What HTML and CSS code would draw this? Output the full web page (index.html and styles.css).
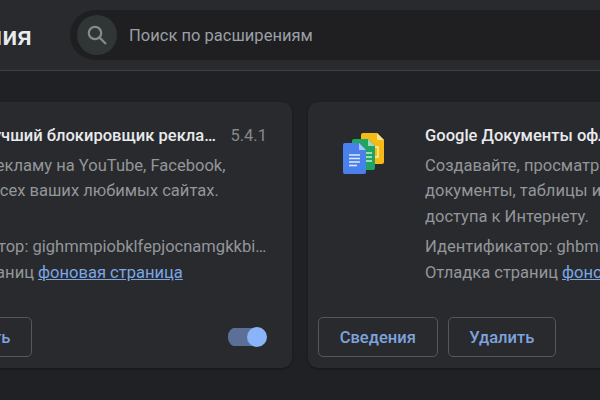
FILE: index.html
```html
<!DOCTYPE html>
<html lang="ru">
<head>
    <meta charset="UTF-8">
    <title>Расширения</title>
    <link rel="stylesheet" href="styles.css">
</head>
<body>
    <div class="toolbar">
        <h1>Расширения</h1>
        <div class="search">
            <div class="search-icon">
                <svg width="24" height="24" viewBox="0 0 24 24" fill="none" stroke="#858a8c" stroke-width="2.2">
                    <circle cx="10" cy="10" r="6.2"/>
                    <path d="M14.6 14.6 L21 21"/>
                </svg>
            </div>
            <span class="search-text">Поиск по расширениям</span>
        </div>
    </div>

    <div class="cards">
        <div class="card">
            <div class="card-main">
                <div class="icon"></div>
                <div class="card-body">
                    <div class="title-row">
                        <div class="title">AdBlock — лучший блокировщик рекламы</div>
                        <div class="version">5.4.1</div>
                    </div>
                    <div class="desc">Блокирует рекламу на YouTube, Facebook,<br>Twitch и на всех ваших любимых сайтах.<br>&nbsp;</div>
                    <div class="id-line">Идентификатор: gighmmpiobklfepjocnamgkkbiglidom</div>
                    <div class="debug">Отладка страниц <a href="#">фоновая страница</a></div>
                </div>
            </div>
            <div class="card-footer">
                <div class="buttons">
                    <button class="btn btn-info">Сведения</button>
                    <button class="btn btn-remove">Удалить</button>
                </div>
                <div class="toggle"><div class="knob"></div></div>
            </div>
        </div>

        <div class="card">
            <div class="card-main">
                <div class="icon">
                    <svg width="48" height="48" viewBox="0 0 48 48">
                        <path d="M23 3 H37 L44 10 V32 a2 2 0 0 1 -2 2 H23 a2 2 0 0 1 -2 -2 V5 a2 2 0 0 1 2 -2 Z" fill="#f5ba15"/>
                        <path d="M37 3 L44 10 H37 Z" fill="#fbe08a"/>
                        <rect x="29" y="17" width="9" height="10" fill="none" stroke="#fdf0c0" stroke-width="1.3"/>
                        <path d="M14 9 H28 L35 16 V38 a2 2 0 0 1 -2 2 H14 a2 2 0 0 1 -2 -2 V11 a2 2 0 0 1 2 -2 Z" fill="#1fa463"/>
                        <path d="M28 9 L35 16 H28 Z" fill="#a5d8bb"/>
                        <path d="M26 23 H32 M26 27 H32 M26 31 H32" stroke="#c8ebd6" stroke-width="1.3"/>
                        <path d="M5 13 H19 L26 20 V42 a2 2 0 0 1 -2 2 H5 a2 2 0 0 1 -2 -2 V15 a2 2 0 0 1 2 -2 Z" fill="#4a80ec"/>
                        <path d="M19 13 L26 20 H19 Z" fill="#a8c4f8"/>
                        <path d="M9 25 H20 M9 28.5 H20 M9 32 H20 M9 35.5 H17" stroke="#dfe9fc" stroke-width="1.4"/>
                    </svg>
                </div>
                <div class="card-body">
                    <div class="title-row">
                        <div class="title">Google Документы офлайн</div>
                        <div class="version">1.18.0</div>
                    </div>
                    <div class="desc">Создавайте, просматривайте и редактируйте<br>документы, таблицы и презентации без<br>доступа к Интернету.</div>
                    <div class="id-line">Идентификатор: ghbmnnjooekpmoecnnnilnnbdlolhkhi</div>
                    <div class="debug">Отладка страниц <a href="#">фоновая страница</a></div>
                </div>
            </div>
            <div class="card-footer">
                <div class="buttons">
                    <button class="btn btn-info">Сведения</button>
                    <button class="btn btn-remove">Удалить</button>
                </div>
                <div class="toggle"><div class="knob"></div></div>
            </div>
        </div>
    </div>
</body>
</html>
```

FILE: styles.css
```css
html, body {
    height: 100%;
}

body {
    margin: 0;
    overflow: hidden;
    background: #202124;
    color: #e8eaed;
    font-family: Roboto, "Liberation Sans", sans-serif;
    font-size: 16.55px;
}

/* шапка */
.toolbar {
    display: flex;
    align-items: center;
    width: 1200px;
    height: 70px;
    margin-left: -128px;
    border-bottom: 1px solid #3f4043;
    background: #292a2d;
}

h1 {
    flex: 0 0 160px;
    margin: 0;
    font-size: 26.5px;
    font-weight: 500;
    white-space: nowrap;
    text-align: right;
}

.search {
    display: flex;
    align-items: center;
    gap: 12px;
    width: 900px;
    height: 50px;
    margin-left: 38px;
    padding-left: 7px;
    border-radius: 25px;
    background: #1f1e20;
}

.search-icon {
    display: flex;
    align-items: center;
    justify-content: center;
    width: 40px;
    height: 40px;
    border-radius: 50%;
    background: #2f3635;
}

.search-text {
    color: #9aa0a6;
}

/* карточки */
.cards {
    display: flex;
    gap: 16px;
    margin: 31px 0 0 -216px;
}

.card {
    display: flex;
    flex-direction: column;
    justify-content: space-between;
    flex: 0 0 508px;
    width: 508px;
    min-width: 0;
    box-sizing: border-box;
    height: 266px;
    border-radius: 10px;
    background: #292a2d;
    box-shadow: 0 1px 3px rgba(0, 0, 0, 0.35);
}

.card-main {
    display: flex;
    min-width: 0;
    padding: 21px 25px 0 32px;
}

.icon {
    flex: 0 0 48px;
    height: 48px;
    margin: 7px 37px 0 0;
}

.card-body {
    flex: 1;
    min-width: 0;
    color: #93969a;
    line-height: 25.5px;
}

.title-row {
    display: flex;
    align-items: center;
    gap: 12px;
    margin-bottom: 4px;
}

.title {
    flex: 1;
    min-width: 0;
    color: #e8eaed;
    font-weight: 500;
    white-space: nowrap;
    overflow: hidden;
    text-overflow: ellipsis;
}

.version {
    color: #85888c;
}

.desc {
    white-space: nowrap;
}

.id-line {
    margin-top: 5px;
    white-space: nowrap;
    overflow: hidden;
    text-overflow: ellipsis;
}

.debug a {
    color: #7ba6e6;
}

.card-footer {
    display: flex;
    align-items: center;
    justify-content: space-between;
    padding: 0 25px 11px 10px;
}

.buttons {
    display: flex;
    gap: 10.5px;
}

.btn {
    height: 40px;
    border: 1.5px solid #55575b;
    border-radius: 5px;
    background: transparent;
    color: #7ea3df;
    font-family: inherit;
    font-size: 16.55px;
    font-weight: 500;
}

.btn-info {
    width: 119.5px;
}

.btn-remove {
    width: 107.5px;
}

.toggle {
    display: flex;
    align-items: center;
    justify-content: flex-end;
    width: 39px;
    height: 20px;
    border-radius: 9px;
    background: linear-gradient(#5c6f96, #5c6f96) 0 1px / 34px 18px no-repeat;
}

.knob {
    width: 20px;
    height: 20px;
    border-radius: 50%;
    background: #8ab4f8;
}
```
